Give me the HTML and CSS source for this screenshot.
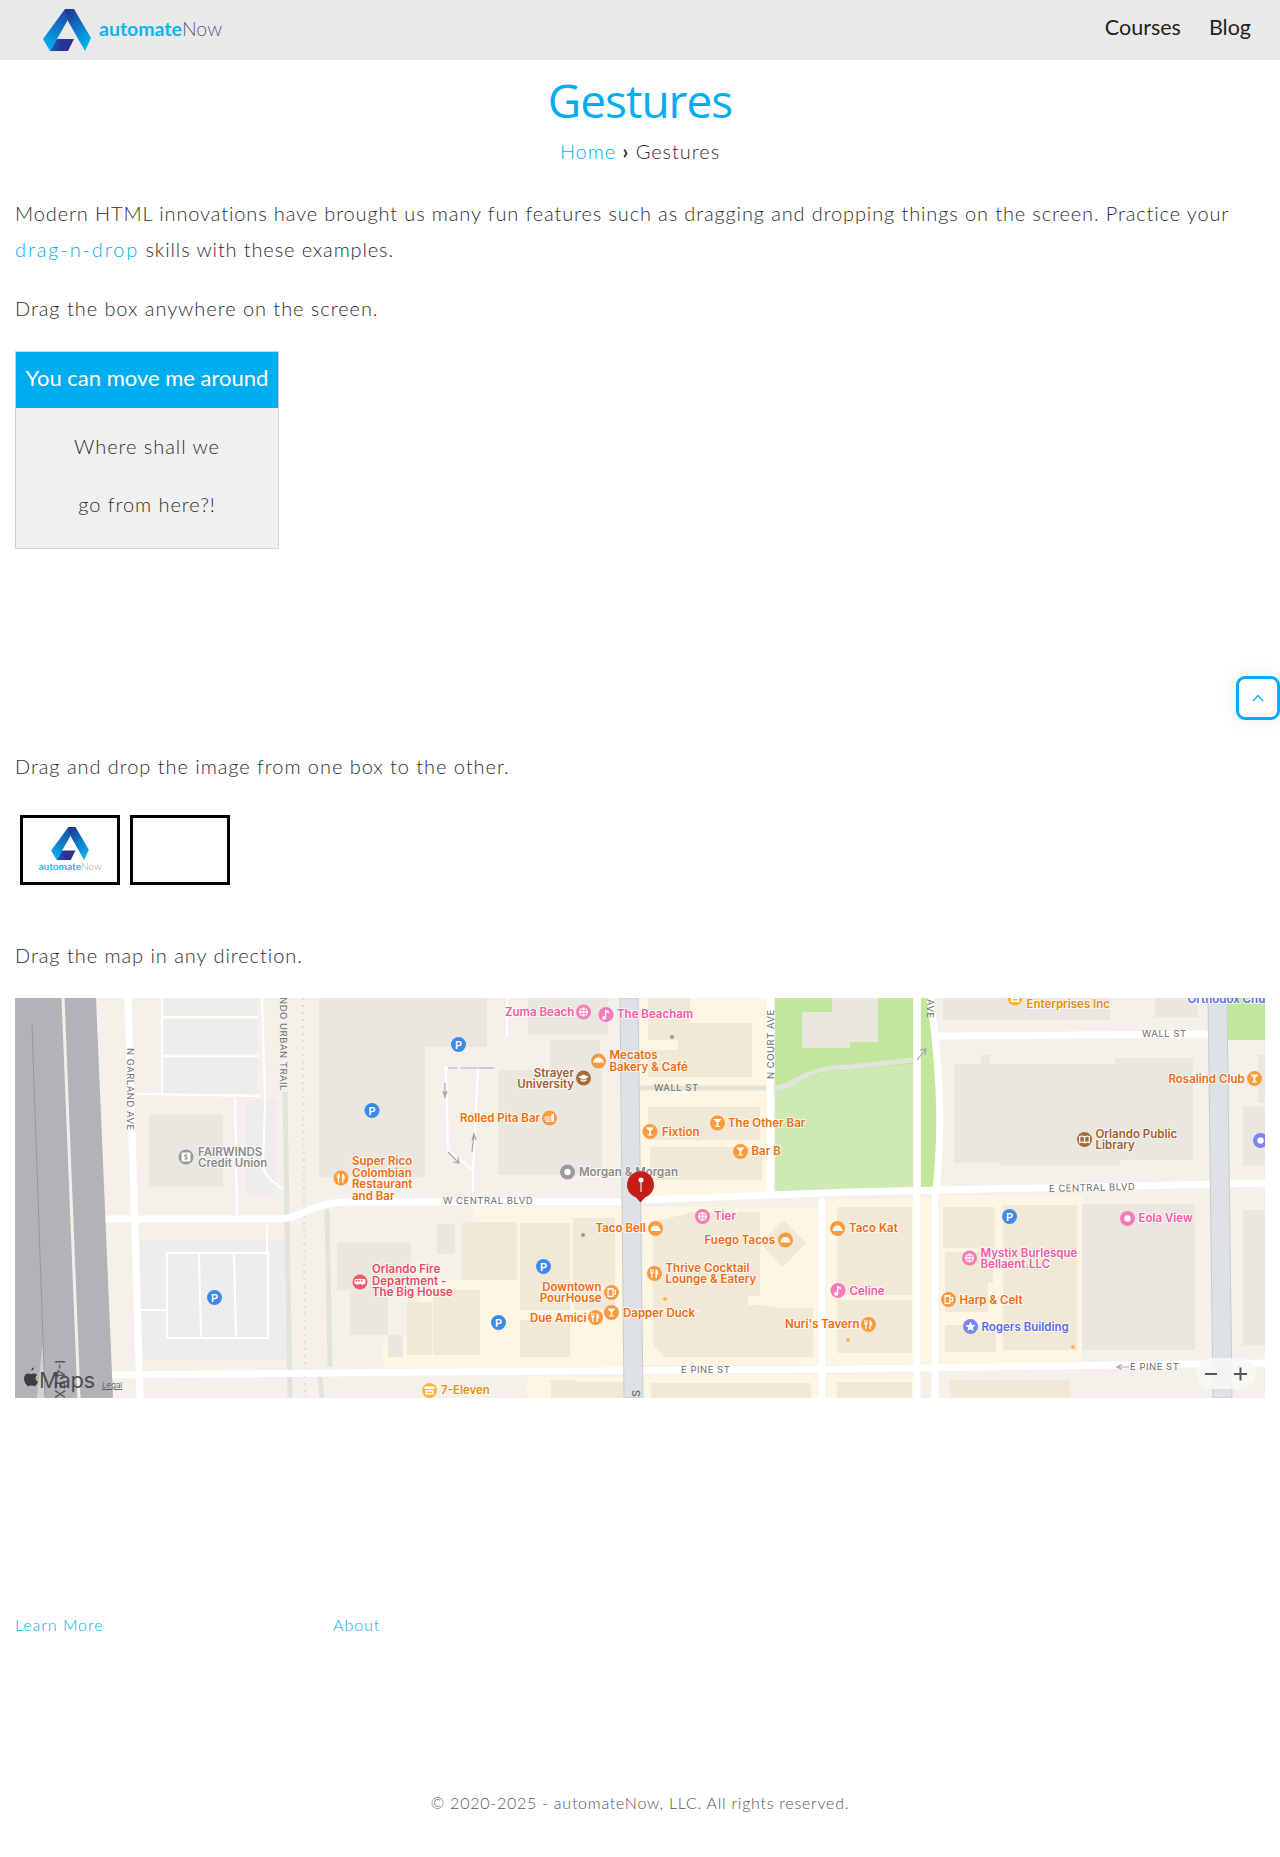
FILE: index.html
```html
<!DOCTYPE html>
<html lang="en">
<head>
    <meta charset="UTF-8">
    <meta name="viewport" content="width=device-width, initial-scale=1.0">
    <title>Gestures | automateNow</title>
    <link rel="stylesheet" href="styles.css">
</head>
<body>
    <svg class="defs" width="0" height="0">
        <defs>
            <linearGradient id="logo-left" x1="0.7" y1="0" x2="0.2" y2="1">
                <stop offset="0" stop-color="#1d45a5"/>
                <stop offset="1" stop-color="#00b4f1"/>
            </linearGradient>
            <linearGradient id="logo-right" x1="0.1" y1="0" x2="0.8" y2="1">
                <stop offset="0" stop-color="#232f8e"/>
                <stop offset="0.45" stop-color="#0f71c4"/>
                <stop offset="1" stop-color="#00b9f4"/>
            </linearGradient>
            <linearGradient id="logo-base" x1="0" y1="0" x2="1" y2="0">
                <stop offset="0" stop-color="#0d63b5"/>
                <stop offset="0.5" stop-color="#2a3196"/>
                <stop offset="1" stop-color="#2b3091"/>
            </linearGradient>
            <symbol id="logo-mark" viewBox="43 9 48 42">
                <path fill="url(#logo-left)" d="M43 39 65 9h9L57 39l-7 12z"/>
                <path fill="url(#logo-right)" d="M65 9h9l17 29-6 13-17-30z"/>
                <path fill="url(#logo-base)" d="M50 51l7-12h17l-6 12z"/>
            </symbol>

            <g id="bar"><circle r="7.5"/><path fill="#fff" d="M-4-4H4L.8-.2V3H2.6V4H-2.6V3H-.8V-.2Z"/></g>
            <g id="fork"><circle r="7.5"/><path fill="#fff" d="M-4.2-4.5v3.4a1.5 1.5 0 0 0 1 1.4V4.5H-2V.3A1.5 1.5 0 0 0-1-1.1V-4.5H-1.7V-1.6H-2.2V-4.5H-3V-1.6H-3.5V-4.5ZM1-4.5C3.2-4 3.8-1.5 3.8 1H2.4V4.5H1Z"/></g>
            <g id="taco"><circle r="7.5"/><path fill="#fff" d="M-5 2.6C-5-1-2.5-3 0-3S5-1 5 2.6Z"/></g>
            <g id="beer"><circle r="7.5"/><path fill="#fff" fill-rule="evenodd" d="M-4-4.5H2V-2.5H4.5V2.2H2V4.5H-4ZM-2.8-2.8V3.3H.8V-2.8ZM2-1.4V1.1H3.4V-1.4Z"/></g>
            <g id="note"><circle r="7.5"/><path fill="#fff" d="M-1-5V1.4A2 2 0 1 0 .3 3.2V-2.4L3-1V-2.9Z"/></g>
            <g id="globe"><circle r="7.5"/><circle r="4.6" fill="#fff"/><path fill="none" stroke="#f87ab8" stroke-width=".7" d="M-5-1.6H5M-5 1.6H5M-1.6-5V5M1.6-5V5"/></g>
            <g id="ring"><circle r="7.5"/><circle r="3.2" fill="#fff"/></g>
            <g id="park"><circle r="7.5"/><text class="park-letter" y="4" text-anchor="middle">P</text></g>
            <g id="star"><circle r="7.5"/><path fill="#fff" d="M0-5 1.5-1.6 5-1.3 2.3 1 3.1 4.5 0 2.7-3.1 4.5-2.3 1-5-1.3-1.5-1.6Z"/></g>
            <g id="book"><circle r="7.5"/><path fill="none" stroke="#fff" stroke-width="1.2" d="M0-2.6C-1.5-3.6-3.4-3.6-4.8-3V3C-3.4 2.4-1.5 2.4 0 3.4 1.5 2.4 3.4 2.4 4.8 3V-3C3.4-3.6 1.5-3.6 0-2.6V3.4"/></g>
            <g id="cap"><circle r="7.5"/><path fill="#fff" d="M-5.4-1 0-3.6 5.4-1 0 1.6ZM-3 1V2.6C-1 4.2 1 4.2 3 2.6V1L0 2.6Z"/></g>
            <g id="bread"><circle r="7.5"/><path fill="#fff" d="M-5.2 2.2C-5-2-2.4-3.6 0-3.6S5-2 5.2 2.2L2.8 1 1.2 2.2 0 .8-1.2 2.2-2.8 1Z"/></g>
            <g id="pita"><circle r="7.5"/><path fill="#fff" d="M-5-1.6H1V-.6H-5ZM-5 .4H1V1.4H-5ZM-4.4 2.4H1V4H-3.4ZM1.8-3.6 4.4-4.6V4H1.8Z"/></g>
            <g id="bus"><circle r="7.5"/><path fill="#fff" fill-rule="evenodd" d="M-5.4-3H5.4V2H3.8A1.3 1.3 0 0 1 1.3 2H-1.3A1.3 1.3 0 0 1-3.8 2H-5.4ZM-4.4-2V-.4H-2.8V-2ZM-1.8-2V-.4H-.2V-2ZM.8-2V-.4H2.4V-2Z"/></g>
            <g id="bank"><circle r="7.5"/><rect x="-4.4" y="-4.4" width="8.8" height="8.8" rx="1" fill="#fff"/><path fill="none" stroke="#9a9a9a" stroke-width="1" d="M1.5-1.7C.8-2.6-1.6-2.6-1.6-1.1S1.7-.2 1.7 1.1-.9 2.6-1.7 1.7M0-3.2V3.2"/></g>
            <g id="shop"><circle r="7.5"/><path fill="#fff" d="M-5-4H5V-1.4H-5ZM-4 -.4H4V4H-4Z"/><path fill="#fbb82e" d="M-2.6 1H2.6V2.6H-2.6Z"/></g>
        </defs>
    </svg>

    <header class="topbar">
        <a class="brand" href="#">
            <svg class="brand-mark"><use href="#logo-mark"/></svg>
            <span class="wordmark"><b>automate</b>Now</span>
        </a>
        <nav class="topnav">
            <a href="#">Courses</a>
            <a href="#">Blog</a>
        </nav>
    </header>

    <main class="content">
        <h1>Gestures</h1>
        <div class="crumbs"><a href="#">Home</a> <span class="sep">›</span> Gestures</div>

        <p class="intro">Modern HTML innovations have brought us many fun features such as dragging and dropping things on the screen. Practice your <a href="#">drag-n-drop</a> skills with these examples.</p>

        <p>Drag the box anywhere on the screen.</p>

        <div class="drag-area">
            <div class="move-box">
                <div class="move-box-head">You can move me around</div>
                <div class="move-box-body">
                    <p>Where shall we</p>
                    <p>go from here?!</p>
                </div>
            </div>
        </div>

        <p>Drag and drop the image from one box to the other.</p>

        <div class="drop-row">
            <div class="drop-box">
                <svg class="drop-mark"><use href="#logo-mark"/></svg>
                <span class="drop-word"><b>automate</b>Now</span>
            </div>
            <div class="drop-box"></div>
        </div>

        <p>Drag the map in any direction.</p>

        <svg class="map" viewBox="15 998 1250 400" width="1250" height="400">
            <rect x="15" y="998" width="1250" height="400" fill="#f4f1eb"/>

            <!-- commercial district -->
            <g class="zone">
                <rect x="640" y="998" width="130" height="200"/>
                <path d="M473 1207H624V1367H383V1337H420V1280H473Z"/>
                <rect x="643" y="1207" width="175" height="158"/>
                <rect x="827" y="1199" width="86" height="165"/>
                <rect x="922" y="1197" width="8" height="166"/>
                <rect x="940" y="1195" width="143" height="168"/>
                <rect x="643" y="1375" width="175" height="23"/>
                <rect x="827" y="1375" width="86" height="23"/>
                <rect x="527" y="1377" width="97" height="21"/>
            </g>

            <!-- parks -->
            <path class="park-top" d="M775 998H913V1190L775 1192Z"/>
            <path class="park-low" d="M775 1090C800 1085 810 1070 850 1070L913 1064V1190L775 1192Z"/>
            <path class="park-top" d="M921 998H931C940 1080 942 1130 936 1188H921Z"/>
            <rect class="park-top" x="1227" y="998" width="38" height="42"/>
            <path class="building" d="M802 1012H832V998H878V1042H850V1048H802Z"/>
            <path class="trail" d="M775 1088C795 1088 800 1067 850 1067L913 1060"/>

            <!-- grey buildings -->
            <g class="building">
                <rect x="319" y="998" width="101" height="179"/>
                <rect x="420" y="998" width="67" height="49"/>
                <rect x="420" y="1047" width="5" height="130"/>
                <rect x="528" y="998" width="80" height="37"/>
                <rect x="550" y="1040" width="50" height="30"/>
                <rect x="498" y="1070" width="104" height="105"/>
                <rect x="149" y="1115" width="74" height="72"/>
                <rect x="337" y="1243" width="74" height="47"/>
                <rect x="350" y="1290" width="38" height="45"/>
                <rect x="388" y="1335" width="15" height="22"/>
                <rect x="437" y="1224" width="18" height="30"/>
                <path d="M954 1064H981V1055H990V1064H1115V1058H1193V1160H1120V1165H1000V1163H954Z"/>
                <rect x="943" y="998" width="167" height="22"/>
                <rect x="1155" y="998" width="43" height="19"/>
                <rect x="1082" y="1204" width="113" height="146"/>
                <rect x="1243" y="1107" width="22" height="58"/>
                <rect x="1243" y="1210" width="22" height="135"/>
                <rect x="1258" y="1055" width="7" height="48"/>
            </g>

            <!-- parking lots -->
            <g class="lot">
                <rect x="162" y="998" width="96" height="17"/>
                <rect x="162" y="1020" width="96" height="33"/>
                <rect x="162" y="1058" width="96" height="35"/>
                <rect x="140" y="1240" width="147" height="120"/>
                <rect x="246" y="1100" width="30" height="95"/>
            </g>

            <!-- cream buildings -->
            <g class="shop-block">
                <path d="M648 998H690V1023H752V1077H648V1050H678V1040H648Z"/>
                <rect x="648" y="1107" width="112" height="33"/>
                <rect x="650" y="1147" width="112" height="33"/>
                <rect x="462" y="1222" width="55" height="58"/>
                <rect x="520" y="1223" width="50" height="87"/>
                <rect x="573" y="1218" width="42" height="69"/>
                <rect x="575" y="1290" width="40" height="20"/>
                <rect x="433" y="1290" width="47" height="65"/>
                <rect x="407" y="1302" width="25" height="53"/>
                <rect x="520" y="1320" width="50" height="37"/>
                <path d="M653 1222 693 1212H760V1296H748V1310H653Z"/>
                <path d="M653 1312H700V1305H760L782 1308H813V1357H665L653 1345Z"/>
                <path d="M783 1220 806 1243 783 1267 760 1243Z"/>
                <rect x="837" y="1207" width="75" height="88"/>
                <rect x="837" y="1300" width="75" height="53"/>
                <rect x="943" y="1207" width="52" height="41"/>
                <rect x="945" y="1252" width="48" height="31"/>
                <rect x="945" y="1283" width="43" height="29"/>
                <rect x="945" y="1325" width="51" height="27"/>
                <rect x="1003" y="1205" width="74" height="145"/>
                <rect x="551" y="1380" width="25" height="18"/>
                <rect x="575" y="1382" width="50" height="16"/>
                <rect x="651" y="1383" width="160" height="15"/>
                <rect x="837" y="1382" width="75" height="16"/>
                <rect x="950" y="1380" width="120" height="18"/>
            </g>

            <!-- minor roads and trails -->
            <g class="trail">
                <path d="M285 1092 290 1398"/>
                <path d="M327 1210 330 1367"/>
                <path d="M320 1377 322 1398"/>
                <path d="M640 1088H775"/>
            </g>
            <path class="rail" d="M303 998 305 1398"/>
            <g class="lane">
                <path d="M262 998 265 1100 263 1167C265 1177 275 1183 283 1190"/>
                <path d="M235 1098 237 1215"/>
                <path d="M137 1094 260 1096"/>
                <path d="M162 1017H258M162 1056H258M162 998V1094"/>
                <path d="M167 1253H268V1338H167ZM199 1253 201 1338M234 1253 236 1338M267 1225V1253M140 1310H167"/>
                <path d="M446 1068H478L473 1170C465 1163 455 1158 448 1150L446 1068ZM473 1170V1200"/>
                <path d="M507 998V1037"/>
            </g>

            <!-- main roads -->
            <g class="road">
                <path d="M128 998 140 1398"/>
                <path d="M70 1219H280C300 1219 315 1202 345 1202H620L640 1200 850 1192 1265 1183"/>
                <path d="M110 1375 430 1372 850 1369 1265 1363"/>
                <path d="M770 998V1192"/>
                <path d="M822 1198V1398"/>
                <path d="M917 998V1398"/>
                <path d="M930 998C942 1080 942 1140 935 1200V1398"/>
                <path d="M933 1036 1208 1034"/>
            </g>

            <!-- arterials -->
            <path class="arterial" d="M620 998H638L643 1398H624Z"/>
            <path class="arterial" d="M1208 998H1227L1232 1398H1213Z"/>

            <!-- interstate -->
            <path class="highway" d="M15 998H96L113 1398H15Z"/>
            <path class="highway-median" d="M37 1398 43 1340 45 1398Z"/>
            <path class="highway-line" d="M32 1025 45 1397"/>
            <path class="highway-divider" d="M63 998 79 1398"/>

            <!-- road names -->
            <text class="street" transform="rotate(90 127 1048)" x="127" y="1048">N GARLAND AVE</text>
            <text class="street end" transform="rotate(90 280 1091)" x="280" y="1091">NDO URBAN TRAIL</text>
            <text class="street" x="443" y="1204">W CENTRAL BLVD</text>
            <text class="street" x="654" y="1091">WALL ST</text>
            <text class="street" transform="rotate(-90 774 1079)" x="774" y="1079">N COURT AVE</text>
            <text class="street" transform="rotate(90 927 999)" x="927" y="999">AVE</text>
            <text class="street" x="1142" y="1037">WALL ST</text>
            <text class="street" transform="rotate(-1.4 1049 1192)" x="1049" y="1192">E CENTRAL BLVD</text>
            <text class="street" x="681" y="1373">E PINE ST</text>
            <text class="street" x="1130" y="1370">E PINE ST</text>
            <path class="arrow" d="M1129 1367H1118M1122 1364.5 1117 1367 1122 1369.5"/>
            <path class="arrow" d="M458 1068H448M494 1068H460"/>
            <path class="arrow" d="M445 1083V1095M443 1091 445 1097 447 1091"/>
            <path class="arrow" d="M474 1135 472 1152M472 1140 474 1134 476 1140"/>
            <path class="arrow" d="M448 1152 459 1163M453 1162 459 1163 458 1157"/>
            <path class="arrow" d="M917 1060 925 1050M920 1050 926 1049 925 1055"/>
            <text class="street big" transform="rotate(-90 640 1397)" x="640" y="1397">S</text>
            <text class="shield" transform="rotate(90 55 1360)" x="55" y="1360">I-4 EX</text>

            <!-- places -->
            <g class="gray">
                <use href="#bank" x="186" y="1157"/>
                <text class="lbl" x="198" y="1156">FAIRWINDS</text>
                <text class="lbl" x="198" y="1167">Credit Union</text>
                <use href="#ring" x="567.5" y="1172"/>
                <text class="lbl" x="579" y="1175.5">Morgan &amp; Morgan</text>
            </g>
            <g class="orange">
                <use href="#fork" x="341" y="1178"/>
                <text class="lbl" x="352" y="1165">Super Rico</text>
                <text class="lbl" x="352" y="1176.5">Colombian</text>
                <text class="lbl" x="352" y="1188">Restaurant</text>
                <text class="lbl" x="352" y="1199.5">and Bar</text>
                <use href="#bread" x="598.5" y="1061"/>
                <text class="lbl" x="609.5" y="1059">Mecatos</text>
                <text class="lbl" x="609.5" y="1070.5">Bakery &amp; Café</text>
                <use href="#pita" x="549.5" y="1118"/>
                <text class="lbl" x="460" y="1122">Rolled Pita Bar</text>
                <use href="#bar" x="650" y="1131.5"/>
                <text class="lbl" x="662" y="1135.5">Fixtion</text>
                <use href="#bar" x="717.5" y="1123"/>
                <text class="lbl" x="728" y="1127">The Other Bar</text>
                <use href="#bar" x="740.5" y="1151.5"/>
                <text class="lbl" x="751.5" y="1155">Bar B</text>
                <use href="#taco" x="655.5" y="1228.5"/>
                <text class="lbl" x="595.5" y="1232">Taco Bell</text>
                <use href="#taco" x="785.5" y="1240"/>
                <text class="lbl" x="704.5" y="1244">Fuego Tacos</text>
                <use href="#fork" x="654.5" y="1273.5"/>
                <text class="lbl" x="665.5" y="1271.5">Thrive Cocktail</text>
                <text class="lbl" x="665.5" y="1283">Lounge &amp; Eatery</text>
                <use href="#beer" x="611.5" y="1292.5"/>
                <text class="lbl end" x="601.5" y="1290.5">Downtown</text>
                <text class="lbl end" x="601.5" y="1302">PourHouse</text>
                <use href="#fork" x="595.5" y="1317.5"/>
                <text class="lbl" x="530" y="1321.5">Due Amici</text>
                <use href="#bar" x="611.5" y="1312.5"/>
                <text class="lbl" x="623" y="1316.5">Dapper Duck</text>
                <use href="#fork" x="868.5" y="1324.5"/>
                <text class="lbl" x="785" y="1328">Nuri's Tavern</text>
                <use href="#taco" x="837.5" y="1228.5"/>
                <text class="lbl" x="849" y="1232">Taco Kat</text>
                <use href="#bar" x="1254.5" y="1078.5"/>
                <text class="lbl" x="1168.5" y="1082.5">Rosalind Club</text>
                <use href="#beer" x="948.5" y="1299.5"/>
                <text class="lbl" x="959.5" y="1303.5">Harp &amp; Celt</text>
            </g>
            <g class="pink">
                <use href="#globe" x="583.5" y="1012"/>
                <text class="lbl" x="505" y="1016">Zuma Beach</text>
                <use href="#note" x="606" y="1014.5"/>
                <text class="lbl" x="617" y="1018">The Beacham</text>
                <use href="#globe" x="702.5" y="1216.5"/>
                <text class="lbl" x="714" y="1220">Tier</text>
                <use href="#ring" x="1127.5" y="1218.5"/>
                <text class="lbl" x="1138.5" y="1222">Eola View</text>
                <use href="#globe" x="969.5" y="1258"/>
                <text class="lbl" x="980.5" y="1256.5">Mystix Burlesque</text>
                <text class="lbl" x="980.5" y="1267.5">Bellaent.LLC</text>
                <use href="#note" x="838" y="1290.5"/>
                <text class="lbl" x="849.5" y="1294.5">Celine</text>
            </g>
            <g class="brown">
                <use href="#cap" x="583.5" y="1078"/>
                <text class="lbl end" x="574" y="1076.5">Strayer</text>
                <text class="lbl end" x="574" y="1088">University</text>
                <use href="#book" x="1084.5" y="1139.5"/>
                <text class="lbl" x="1095.5" y="1137.5">Orlando Public</text>
                <text class="lbl" x="1095.5" y="1149">Library</text>
            </g>
            <g class="red">
                <use href="#bus" x="360" y="1282"/>
                <text class="lbl" x="372" y="1273">Orlando Fire</text>
                <text class="lbl" x="372" y="1285">Department -</text>
                <text class="lbl" x="372" y="1296">The Big House</text>
            </g>
            <g class="amber">
                <use href="#shop" x="429.5" y="1390.5"/>
                <text class="lbl" x="441" y="1394">7-Eleven</text>
                <use href="#shop" x="1015" y="998"/>
                <text class="lbl" x="1026.5" y="1008">Enterprises Inc</text>
            </g>
            <g class="violet">
                <text class="lbl" x="1187.5" y="1002.5">Orthodox Chu</text>
                <use href="#ring" x="1260.5" y="1140.5"/>
                <use href="#star" x="970.5" y="1326.5"/>
                <text class="lbl" x="981.5" y="1330.5">Rogers Building</text>
            </g>
            <g class="blue">
                <use href="#park" x="372" y="1110.5"/>
                <use href="#park" x="214.5" y="1297.5"/>
                <use href="#park" x="458.5" y="1044.5"/>
                <use href="#park" x="543.5" y="1266.5"/>
                <use href="#park" x="498.5" y="1322.5"/>
                <use href="#park" x="1009.5" y="1216.5"/>
            </g>

            <!-- small dots -->
            <circle class="dot-gray" cx="672" cy="1037" r="2"/>
            <circle class="dot-gray" cx="583" cy="1235" r="2"/>
            <circle class="dot-gold" cx="665" cy="1299" r="2"/>
            <circle class="dot-gold" cx="848" cy="1340" r="2"/>
            <circle class="dot-gold" cx="1073" cy="1347" r="2"/>

            <!-- pin -->
            <path class="pin" d="M640.5 1202.5 636 1197.5A13.5 13.5 0 1 1 645 1197.5Z"/>
            <path class="pin-stem" d="M641 1181V1192"/>
            <circle class="pin-dot" cx="641" cy="1180" r="2.5"/>

            <!-- map chrome -->
            <path class="apple" transform="translate(-2 0)" d="M33.5 1370.5C34.8 1370.4 36 1369 35.8 1367.4 34.4 1367.5 33 1369 33.5 1370.5ZM37.5 1378C37.5 1376.2 39 1375.3 39 1375.2 38 1373.8 36.500 1373.600 36 1373.600 34.700 1373.500 33.600 1374.300 33 1374.300S31.300 1373.500 30.200 1373.600C28.800 1373.600 27.500 1374.400 26.800 1375.600 25.300 1378.200 26.400 1382 27.900 1384.100 28.600 1385.100 29.500 1386.300 30.600 1386.200 31.700 1386.200 32.100 1385.500 33.400 1385.500S35.100 1386.200 36.200 1386.200C37.400 1386.200 38.100 1385.100 38.800 1384.100 39.600 1382.900 40 1381.800 40 1381.700 40 1381.700 37.500 1380.800 37.500 1378Z"/>
            <text class="maps-word" x="39" y="1388">Maps</text>
            <text class="legal" x="102" y="1388">Legal</text>
            <rect class="zoom-pill" x="1196" y="1358" width="60" height="31" rx="15.500"/>
            <path class="zoom-sign" d="M1205 1374H1217M1234 1374H1247M1240.500 1367.500V1380.500"/>
        </svg>

        <div class="foot-links">
            <a href="#">Learn More</a>
            <a href="#">About</a>
        </div>

        <footer class="copy">© 2020-2025 - automateNow, LLC. All rights reserved.</footer>
    </main>

    <button class="to-top" type="button" aria-label="Back to top">
        <svg width="12" height="8" viewBox="0 0 12 8"><path d="M1 7 6 1.500 11 7"/></svg>
    </button>
</body>
</html>
```

FILE: styles.css
```css
body {
    margin: 0;
    height: 1857px;
    overflow: hidden;
    background: #fff;
    color: #2e2e2e;
    font-family: Lato, sans-serif;
    font-size: 20px;
    font-weight: 300;
    letter-spacing: 0.95px;
    line-height: 36px;
}
a {
    color: #00aeef;
    text-decoration: none;
}
.defs {
    position: absolute;
}

.topbar {
    align-items: center;
    background-color: #e9e9e9;
    display: flex;
    height: 60px;
    justify-content: space-between;
    letter-spacing: 0;
    padding: 0 29px 0 43px;
}
.brand {
    align-items: center;
    display: flex;
    gap: 8px;
}
.brand-mark {
    height: 42px;
    width: 48px;
}
.wordmark {
    color: #5a5a78;
    font-size: 19.5px;
    font-weight: 300;
    margin-top: -3px;
}
.wordmark b {
    color: #0db4f3;
    font-weight: 700;
}
.topnav {
    display: flex;
    gap: 28px;
    margin-top: -6px;
}
.topnav a {
    color: #222;
    font-size: 21.5px;
    font-weight: 400;
}

.content {
    padding: 0 15px;
}
h1 {
    color: #00aeef;
    font-family: "Open Sans", sans-serif;
    font-size: 46px;
    font-weight: 500;
    letter-spacing: -1px;
    line-height: 60px;
    margin: 10px 0 0;
    text-align: center;
}
.crumbs {
    margin-top: 3px;
    text-align: center;
}
.crumbs .sep {
    font-weight: 700;
}
p {
    margin: 0 0 23px;
}
.intro {
    letter-spacing: 0.87px;
    margin-top: 26px;
}
.intro a {
    letter-spacing: 1.9px;
}

.drag-area {
    height: 397px;
    margin-top: 25px;
}
.move-box {
    background-color: #f0f0f0;
    border: 1px solid #d3d3d3;
    box-sizing: border-box;
    height: 198px;
    text-align: center;
    width: 264px;
}
.move-box-head {
    background-color: #00aeef;
    color: #fff;
    font-size: 22px;
    font-weight: 400;
    letter-spacing: 0;
    line-height: 52px;
    padding-bottom: 4px;
}
.move-box-body {
    padding-top: 9px;
}
.move-box-body p {
    line-height: 58px;
    margin: 0;
}

.drop-row {
    display: flex;
    gap: 10px;
    height: 122px;
    margin-top: -1px;
    padding: 9px 5px 0;
}
.drop-box {
    align-items: center;
    border: 3px solid #000;
    box-sizing: border-box;
    display: flex;
    flex-direction: column;
    height: 70px;
    padding-top: 9px;
    width: 100px;
}
.drop-mark {
    height: 33px;
    width: 38px;
}
.drop-word {
    color: #9a9ab0;
    font-size: 10px;
    font-weight: 300;
    letter-spacing: 0;
    line-height: 13px;
}
.drop-word b {
    color: #1cb8f3;
    font-weight: 700;
}

.map {
    display: block;
    margin-top: 25px;
}
.zone {
    fill: #fef5e3;
}
.shop-block {
    fill: #f1e8d6;
}
.building {
    fill: #e9e7e0;
}
.lot {
    fill: #eeedec;
}
.park-top {
    fill: #c2e79c;
}
.park-low {
    fill: #cfe9b2;
}
.trail {
    fill: none;
    stroke: #e2e3da;
    stroke-width: 5;
}
.rail {
    fill: none;
    stroke: #e4d9d2;
    stroke-dasharray: 2 5;
    stroke-width: 2;
}
.lane {
    fill: none;
    stroke: #fff;
    stroke-width: 2;
}
.road {
    fill: none;
    stroke: #fff;
    stroke-width: 7;
}
.arterial {
    fill: #dee1e5;
    stroke: #c9ccca;
}
.highway {
    fill: #b2b3b7;
}
.highway-median {
    fill: #d2d3d3;
}
.highway-line {
    fill: none;
    stroke: #97989c;
    stroke-width: 1;
}
.highway-divider {
    fill: none;
    stroke: #f2f0e8;
    stroke-width: 3;
}
.arrow {
    fill: none;
    stroke: #a5a5a5;
    stroke-width: 1.2;
}

.map text {
    font-family: Inter, sans-serif;
    letter-spacing: 0;
}
.map .street {
    fill: #6e6e6e;
    font-size: 9.5px;
    font-weight: 400;
    letter-spacing: 0.5px;
}
.map .street.big {
    font-size: 11px;
    font-weight: 500;
}
.map .shield {
    fill: #333;
    font-size: 13px;
    font-weight: 500;
    opacity: 0.7;
}
.map .lbl {
    font-size: 11.5px;
    font-weight: 600;
    paint-order: stroke;
    stroke: rgba(255, 255, 255, 0.7);
    stroke-width: 2px;
}
.map .end {
    text-anchor: end;
}
.park-letter {
    fill: #fff;
    font-family: Inter, sans-serif;
    font-size: 11px;
    font-weight: 600;
    letter-spacing: 0;
}
.orange { fill: #f26d0f; }
.orange use { fill: #fb9a3d; }
.pink { fill: #f85aa5; }
.pink use { fill: #f87ab8; }
.gray { fill: #8b8b8b; }
.gray use { fill: #9a9a9a; }
.brown { fill: #a2602d; }
.brown use { fill: #a96a3a; }
.red { fill: #ee4c5c; }
.red use { fill: #f05a68; }
.amber { fill: #e3900f; }
.amber use { fill: #fbb82e; }
.violet { fill: #5c6bf0; }
.violet use { fill: #7b83f5; }
.blue use { fill: #3a8bea; }
.dot-gray { fill: #9a9a9a; }
.dot-gold { fill: #fbb84a; }

.pin {
    fill: #c61d14;
}
.pin-stem {
    stroke: #f2b7b2;
    stroke-width: 1.5;
}
.pin-dot {
    fill: #fff;
}

.apple {
    fill: #3d3d3d;
}
.map .maps-word {
    fill: #3d3d3d;
    font-size: 22px;
    font-weight: 400;
    letter-spacing: -0.4px;
    opacity: 0.85;
}
.map .legal {
    fill: #444;
    font-size: 8px;
    text-decoration: underline;
}
.zoom-pill {
    fill: rgba(247, 247, 245, 0.9);
}
.zoom-sign {
    fill: none;
    stroke: #555;
    stroke-width: 2;
}

.foot-links {
    display: grid;
    font-size: 16px;
    grid-template-columns: 318px 1fr;
    margin-top: 209px;
}
.copy {
    color: #555;
    font-size: 16px;
    letter-spacing: 0.75px;
    margin-top: 142px;
    text-align: center;
}

.to-top {
    background: #fff;
    border: 3px solid #00aeef;
    border-radius: 9px;
    box-shadow: 0 0 20px rgba(0, 0, 0, 0.08);
    height: 44px;
    padding: 0;
    position: absolute;
    right: 0;
    top: 676px;
    width: 44px;
}
.to-top svg {
    display: block;
    margin: 0 auto;
}
.to-top path {
    fill: none;
    stroke: #00aeef;
    stroke-width: 1.2;
}
```
